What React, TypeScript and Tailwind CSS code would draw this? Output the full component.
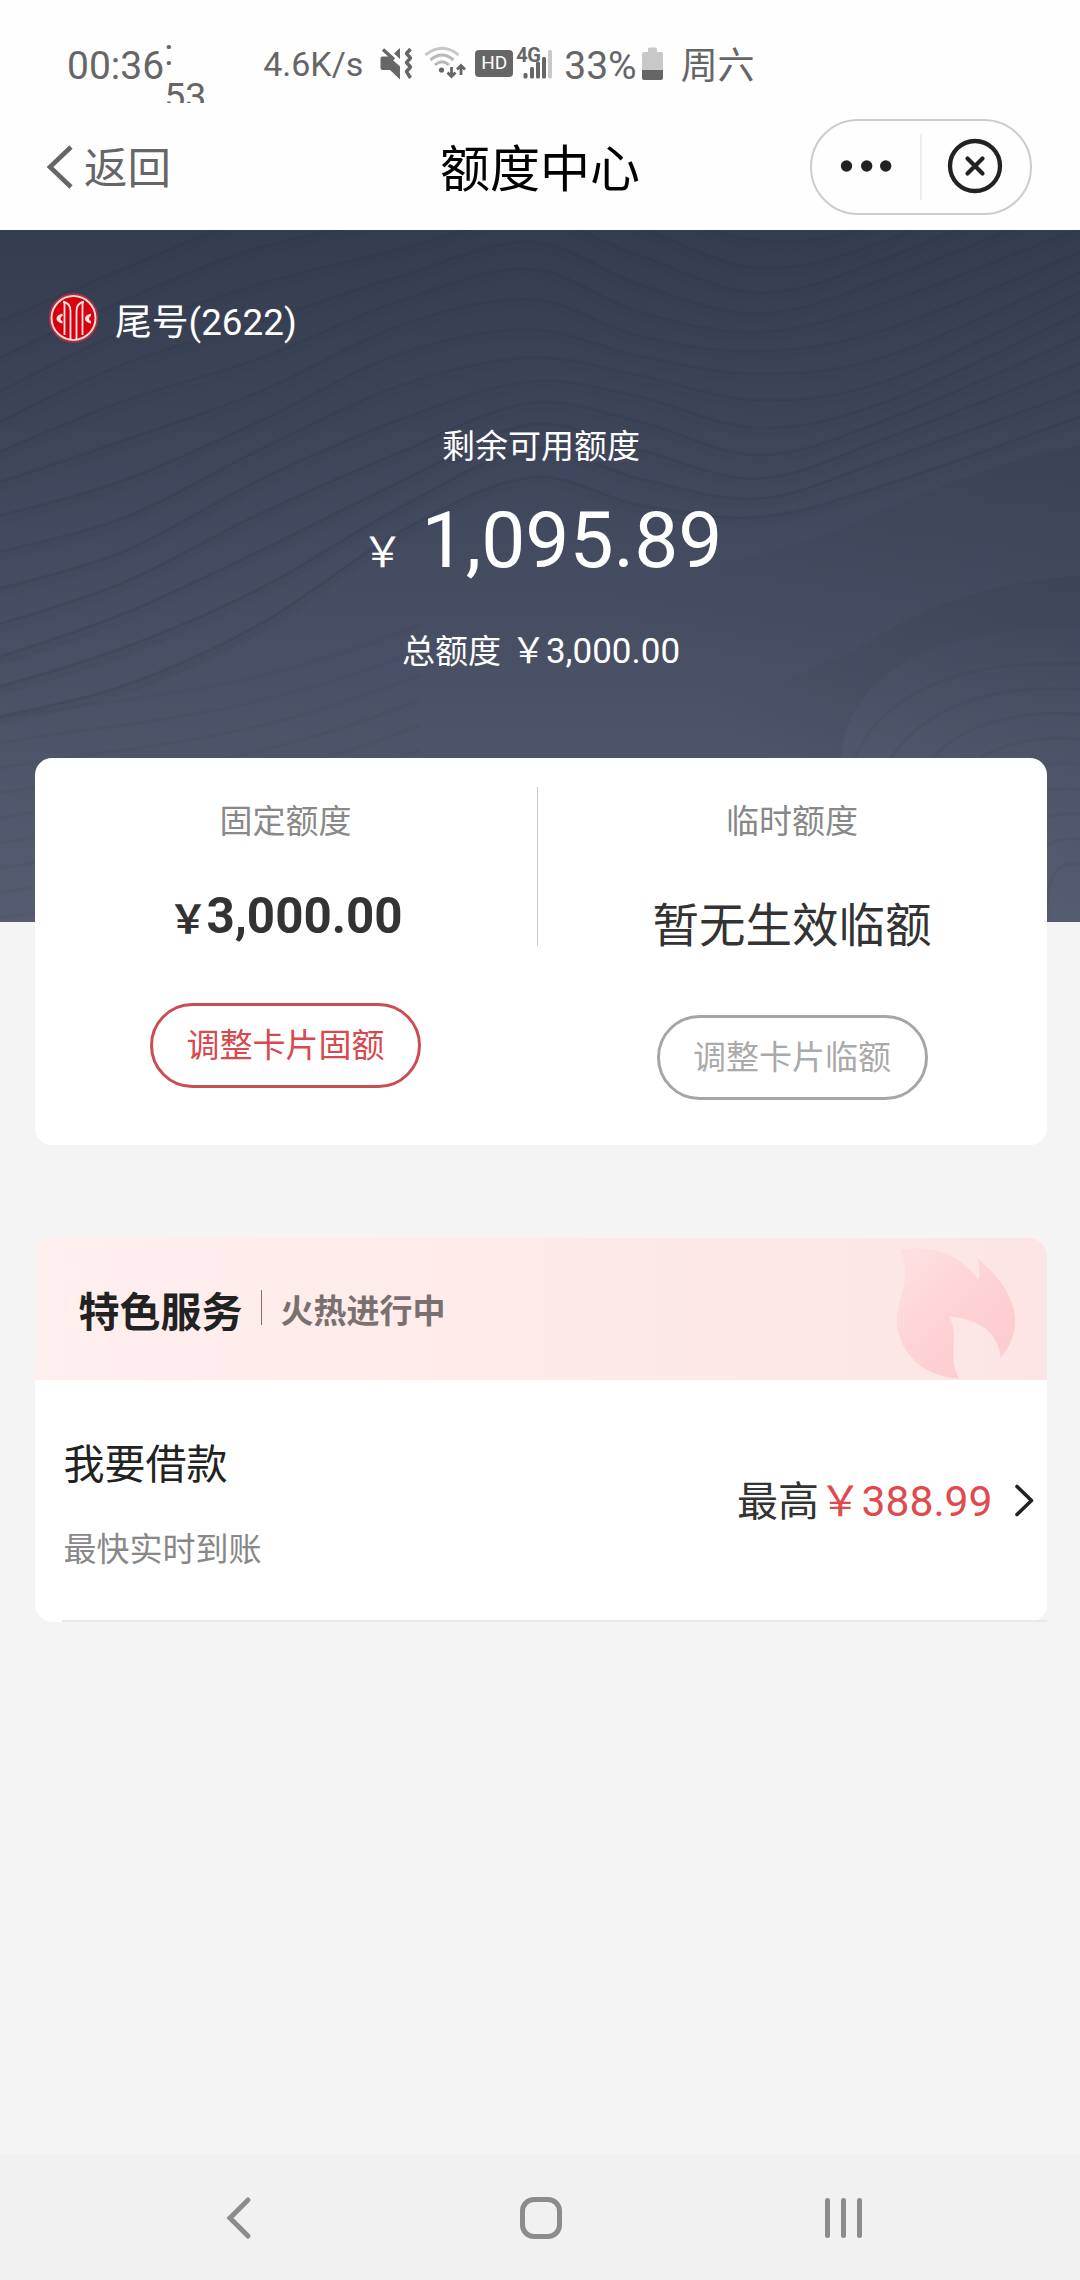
import type { ReactNode } from "react"

type Point = [number, number]

// First and last contour of the hero pattern, the rest are blended between them
const CONTOUR_TOP: Point[] = [[-20, 100], [120, 35], [260, -10], [400, -45], [530, -60], [640, -20], [760, 10], [890, -15], [1100, -110]]
const CONTOUR_BOTTOM: Point[] = [[-20, 460], [120, 425], [260, 355], [400, 275], [530, 225], [640, 245], [760, 266], [890, 234], [1100, 150]]

function smoothPath(points: Point[]) {
  let d = `M${points[0][0]} ${points[0][1]}`
  for (let i = 0; i < points.length - 1; i++) {
    const p0 = points[i - 1] ?? points[i]
    const p1 = points[i]
    const p2 = points[i + 1]
    const p3 = points[i + 2] ?? p2
    d += ` C${p1[0] + (p2[0] - p0[0]) / 6} ${p1[1] + (p2[1] - p0[1]) / 6} ${p2[0] - (p3[0] - p1[0]) / 6} ${p2[1] - (p3[1] - p1[1]) / 6} ${p2[0]} ${p2[1]}`
  }
  return d
}

function contour(t: number) {
  return smoothPath(
    CONTOUR_TOP.map(([x, y], i): Point => [
      x,
      y + (CONTOUR_BOTTOM[i][1] - y) * t + Math.sin(i * 2.1 + t * 9) * 6,
    ])
  )
}

function HeroPattern() {
  const lines = Array.from({ length: 13 }, (_, i) => contour(i / 11))
  const rings = Array.from({ length: 9 }, (_, i) => i * 25)
  return (
    <svg className="absolute inset-0 size-full" viewBox="0 0 1080 692" fill="none" preserveAspectRatio="none">
      <defs>
        <linearGradient id="ridge" x1="1" y1="0.1" x2="0.4" y2="0.6">
          <stop offset="0" stopColor="#2f384b" stopOpacity="0.22" />
          <stop offset="1" stopColor="#2f384b" stopOpacity="0" />
        </linearGradient>
        <linearGradient id="mound" x1="0" y1="0" x2="0" y2="1">
          <stop offset="0" stopColor="#5d647b" stopOpacity="0.05" />
          <stop offset="0.5" stopColor="#5d647b" stopOpacity="0.3" />
        </linearGradient>
      </defs>
      <path d="M1080 215 C1000 230 930 260 860 290 C800 318 700 340 600 350 L500 692 L1080 692 Z" fill="url(#ridge)" />
      <path d="M1080 345 C980 355 930 375 880 405 C830 435 720 480 600 520 L600 692 L1080 692 Z" fill="url(#ridge)" />
      {lines.map((d, i) => (
        <g key={i}>
          <path d={d} stroke="#2b3446" strokeOpacity="0.2" strokeWidth="2.5" />
          <path d={d} transform="translate(0 5)" stroke="#2b3446" strokeOpacity="0.07" strokeWidth="8" />
        </g>
      ))}
      <path d="M842 540 C838 480 880 440 930 420 C980 402 1030 398 1080 398 V692 H842 Z" fill="url(#mound)" />
      {rings.map((r) => (
        <path
          key={r}
          d={`M${850 + r} ${560 + r} C${850 + r} ${490 + r} ${930 + r / 2} ${422 + r} 1090 ${435 + r}`}
          stroke="#2b3446"
          strokeOpacity="0.08"
          strokeWidth="3"
        />
      ))}
      {rings.map((r) => (
        <path key={r} d={`M-10 ${490 + r} C120 ${465 + r} 230 ${470 + r} 420 ${395 + r}`} stroke="#2b3446" strokeOpacity="0.06" strokeWidth="3" />
      ))}
    </svg>
  )
}

function MuteIcon() {
  return (
    <svg className="ml-[17px] mt-[47px] h-[33px] w-[33px]" viewBox="0 0 33 33" fill="none">
      <path d="M0.5 11.5 Q0.5 9.5 2.5 9.5 H9 L20 19.5 V32.5 L10 23 H2.5 Q0.5 23 0.5 21 Z" fill="#666" />
      <path d="M3 2.5 L14 12.5" stroke="#666" strokeWidth="3.4" />
      <path d="M14 6.5 L20 1 V12 Z" fill="#666" />
      <path d="M30.5 2 L26.5 6.5 L30.5 11 L26.5 15.5 L30.5 20 L26.5 24.5 L30.5 31" stroke="#666" strokeWidth="3.4" strokeLinejoin="round" />
    </svg>
  )
}

function WifiIcon() {
  return (
    <svg className="ml-[11px] mt-[46px] h-[34px] w-[42px]" viewBox="0 0 42 34" fill="none">
      <path d="M1.5 9 Q18 -4.5 34.5 9" stroke="#c8c8c8" strokeWidth="3" />
      <path d="M6.5 14 Q18 4 29.5 14" stroke="#b8b8b8" strokeWidth="3" />
      <path d="M11 19 Q18 12.5 25 19" stroke="#b8b8b8" strokeWidth="3" />
      <circle cx="17.5" cy="24" r="2.6" fill="#666" />
      <path d="M27.5 21 V30 M23.5 26.5 L27.5 30.5 L31.5 26.5" stroke="#666" strokeWidth="2.8" />
      <path d="M37 29 V20 M33 23.5 L37 19.5 L41 23.5" stroke="#666" strokeWidth="2.8" />
    </svg>
  )
}

function SignalIcon() {
  return (
    <div className="relative ml-[3px] mt-[46px] h-[34px] w-[36px]">
      <span className="absolute -top-[1px] left-0 text-[20px] leading-[20px] font-bold tracking-[-0.5px]">4G</span>
      <svg className="absolute inset-0 size-full" viewBox="0 0 36 34">
        <rect x="7.5" y="27" width="4" height="5.5" rx="1.5" fill="#666" />
        <rect x="14" y="21" width="4" height="11.5" rx="1.5" fill="#666" />
        <rect x="20" y="15.5" width="4" height="17" rx="1.5" fill="#666" />
        <rect x="26" y="11" width="4" height="21.5" rx="1.5" fill="#666" />
        <rect x="32" y="4" width="4" height="28.5" rx="1.5" fill="#c8c8c8" />
      </svg>
    </div>
  )
}

function StatusBar() {
  return (
    <div className="flex h-[103px] items-start overflow-hidden pl-[67px] text-[#666]">
      <span className="mt-[43px] text-[39px] leading-[46px]">00:36</span>
      <span className="mt-[30px] w-[60px] text-[37.5px] leading-[44px]">
        :<br />53
      </span>
      <span className="ml-[39px] mt-[44px] text-[34px] leading-[40px]">4.6K/s</span>
      <MuteIcon />
      <WifiIcon />
      <span className="ml-[9px] mt-[50px] flex h-[27px] w-[38px] items-center justify-center rounded-[4px] bg-[#666] text-[19px] text-white">
        HD
      </span>
      <SignalIcon />
      <span className="ml-[12px] mt-[43px] text-[39px] leading-[46px]">33%</span>
      <svg className="ml-[5px] mt-[47px] h-[33px] w-[21px]" viewBox="0 0 21 33">
        <path d="M6 5 V2 Q6 0.5 7.5 0.5 H13.5 Q15 0.5 15 2 V5 H19 Q21 5 21 7 V23 H0 V7 Q0 5 2 5 Z" fill="#c8c8c8" />
        <path d="M0 23 H21 V31 Q21 33 19 33 H2 Q0 33 0 31 Z" fill="#666" />
      </svg>
      <span className="ml-[18px] mt-[44px] text-[37px] leading-[46px]">周六</span>
    </div>
  )
}

function Header() {
  return (
    <div className="grid h-[127px] grid-cols-[400px_280px_400px]">
      <div className="flex items-start pl-[46px] pt-[42px] text-[#666]">
        <svg className="h-[44px] w-[28px]" viewBox="0 0 28 44" fill="none">
          <path d="M25 2 L4 22 L25 42" stroke="currentColor" strokeWidth="4.6" />
        </svg>
        <span className="ml-[10px] text-[43.5px] leading-[50px]">返回</span>
      </div>
      <h1 className="pt-[37px] text-center text-[50px] leading-[60px] text-black">额度中心</h1>
      <div className="flex items-start justify-end pr-[48px] pt-[16px]">
        <div className="flex h-[96px] w-[222px] items-center rounded-full border-2 border-[#ccc]">
          <svg className="mb-[2px] ml-[28px] h-[12px] w-[52px]" viewBox="0 0 52 12" fill="#222">
            <circle cx="6.5" cy="6" r="5.7" />
            <circle cx="26.7" cy="6" r="5.7" />
            <circle cx="45.7" cy="6" r="5.7" />
          </svg>
          <div className="ml-[28px] h-[66px] w-[2px] bg-[#eee]" />
          <svg className="mb-[2px] ml-[25px] h-[56px] w-[56px]" viewBox="0 0 56 56" fill="none" stroke="#222">
            <circle cx="28" cy="28" r="25" strokeWidth="4.3" />
            <path d="M20.5 20.5 L35.5 35.5 M35.5 20.5 L20.5 35.5" strokeWidth="4.2" strokeLinecap="round" />
          </svg>
        </div>
      </div>
    </div>
  )
}

function BankLogo() {
  return (
    <svg className="size-[50px]" viewBox="0 0 50 50" fill="none">
      <circle cx="24.5" cy="25" r="24" stroke="#c4283a" strokeWidth="1.4" />
      <circle cx="24.5" cy="25" r="22" fill="#d7000f" stroke="#f8d4d4" strokeWidth="2" />
      <g stroke="#fbe6e6" strokeWidth="1.8">
        <path d="M15.5 8 V42" />
        <path d="M14 9 Q21.5 10 21.5 18 V46" />
        <path d="M33.5 8 V42" />
        <path d="M35 9 Q27.5 10 27.5 18 V46" />
      </g>
      <path d="M13.5 20.5 V23 Q11.5 23.5 11.5 25.5 Q11.5 27.5 13.5 28 V30.5 Q7.5 29 7.5 25.5 Q7.5 22 13.5 20.5 Z" fill="#fbe6e6" />
      <path d="M42 20.5 V23 Q40 23.5 40 25.5 Q40 27.5 42 28 V30.5 Q36 29 36 25.5 Q36 22 42 20.5 Z" fill="#fbe6e6" />
    </svg>
  )
}

function Hero() {
  return (
    <section className="relative h-[692px] bg-gradient-to-b from-[#343c50] via-[#454b60] to-[#565c71] text-white">
      <HeroPattern />
      <div className="relative flex flex-col items-center">
        <div className="mt-[63px] flex h-[50px] w-full items-center gap-[16px] pl-[49px]">
          <BankLogo />
          <span className="pt-[9px] text-[36.8px] leading-[46px]">尾号(2622)</span>
        </div>
        <p className="mt-[84px] pl-[2px] text-[33px] leading-[40px]">剩余可用额度</p>
        <p className="mt-[27px] flex items-baseline pl-[4px] leading-[92px]">
          <span className="text-[42px]">￥</span>
          <span className="ml-[18px] text-[78.5px]">1,095.89</span>
        </p>
        <p className="mt-[33px] flex items-baseline pl-[2px] text-[33px] leading-[40px]">
          <span>总额度</span>
          <span className="ml-[10px] text-[35px]">￥3,000.00</span>
        </p>
      </div>
    </section>
  )
}

function QuotaButton({ tone, children }: { tone: string; children: ReactNode }) {
  return (
    <button className={`flex h-[85px] w-[271px] items-center justify-center rounded-full border-[3px] text-[33px] leading-[40px] ${tone}`}>
      {children}
    </button>
  )
}

function QuotaCard() {
  return (
    <section className="relative mx-auto -mt-[164px] flex h-[387px] w-[1012px] rounded-[17px] bg-white">
      <div className="flex w-[502px] flex-col items-center pt-[44px]">
        <p className="text-[33px] leading-[40px] text-[#888]">固定额度</p>
        <p className="mt-[45px] flex items-baseline leading-[58px] font-bold text-[#333]">
          <span className="text-[39px]">￥</span>
          <span className="-ml-[1px] text-[49.3px]">3,000.00</span>
        </p>
        <div className="mt-[54px]">
          <QuotaButton tone="border-[#cb4d53] text-[#d9484d]">调整卡片固额</QuotaButton>
        </div>
      </div>
      <div className="mt-[29px] h-[159px] w-px bg-[#ccc]" />
      <div className="flex flex-1 flex-col items-center pt-[44px]">
        <p className="text-[33px] leading-[40px] text-[#888]">临时额度</p>
        <p className="mt-[54px] text-[46.5px] leading-[60px] text-[#333]">暂无生效临额</p>
        <div className="mt-[59px]">
          <QuotaButton tone="border-[#a6a6a6] text-[#aaa]">调整卡片临额</QuotaButton>
        </div>
      </div>
    </section>
  )
}

function Flame() {
  return (
    <svg className="absolute right-[30px] top-[8px] h-[134px] w-[122px]" viewBox="0 0 122 134">
      <defs>
        <linearGradient id="flame" x1="0.1" y1="0.1" x2="0.7" y2="0.8">
          <stop offset="0" stopColor="#fddfe1" />
          <stop offset="0.55" stopColor="#fed3d5" />
          <stop offset="1" stopColor="#fdcdd0" />
        </linearGradient>
      </defs>
      <path
        d="M6 4 C42 -3 66 11 83.5 34 Q86 22 82 12 C104 30 118 50 120 71 C121 88 115 100 105.5 112 C104 88 86 73 54 70.5 C66 92 51 106 64 132.5 C25 131 2 103 2 74 C2 52 17 38 6 4 Z"
        fill="url(#flame)"
      />
    </svg>
  )
}

function ServiceCard() {
  return (
    <section className="mx-auto mt-[93px] h-[384px] w-[1012px] overflow-hidden rounded-[18px] bg-white">
      <div className="relative flex h-[142px] items-start bg-gradient-to-r from-[#ffefee] to-[#fde5e5] pl-[44px]">
        <h2 className="mt-[51px] text-[41px] leading-[48px] font-bold text-[#222]">特色服务</h2>
        <div className="ml-[18px] mt-[52px] h-[35px] w-px bg-[#7d7272]" />
        <span className="ml-[19px] mt-[54px] text-[33px] leading-[40px] font-bold text-[#7b7070]">火热进行中</span>
        <Flame />
      </div>
      <div className="flex h-[242px] items-start pl-[29px]">
        <div className="pt-[60px]">
          <p className="text-[41px] leading-[50px] text-[#222]">我要借款</p>
          <p className="mt-[40px] text-[33px] leading-[40px] text-[#888]">最快实时到账</p>
        </div>
        <div className="ml-auto flex items-start pr-[12px] pt-[95px] leading-[50px]">
          <p className="mt-[1px] flex items-baseline">
            <span className="text-[41px] text-[#333]">最高</span>
            <span className="text-[42.6px] text-[#e04a4e]">￥388.99</span>
          </p>
          <svg className="ml-[21px] mt-[9px] h-[33px] w-[21px]" viewBox="0 0 21 33" fill="none">
            <path d="M3 2.5 L17.5 16.5 L3 30.5" stroke="#222" strokeWidth="3.6" strokeLinecap="round" strokeLinejoin="round" />
          </svg>
        </div>
      </div>
    </section>
  )
}

function NavBar() {
  return (
    <nav className="flex h-[126px] items-start bg-[#f1f1f1] pl-[224px] pt-[41px] text-[#8c8c8c]">
      <svg className="h-[46px] w-[30px]" viewBox="0 0 30 46" fill="none">
        <path d="M24 5 L6 23 L24 41" stroke="currentColor" strokeWidth="5" strokeLinecap="round" />
      </svg>
      <div className="ml-[266px] mt-[2px] size-[42px] rounded-[14px] border-[5px] border-current" />
      <div className="ml-[263px] mt-[3px] flex gap-[11px]">
        <i className="h-[40px] w-[5px] rounded-full bg-current" />
        <i className="h-[40px] w-[5px] rounded-full bg-current" />
        <i className="h-[40px] w-[5px] rounded-full bg-current" />
      </div>
    </nav>
  )
}

export default function App() {
  return (
    <div className="flex h-[2280px] w-[1080px] flex-col bg-[#f4f4f4] font-[Roboto,'Noto_Sans_CJK_SC',sans-serif]">
      <div className="bg-[#fefefe]">
        <StatusBar />
        <Header />
      </div>
      <Hero />
      <div className="flex-1 pl-px">
        <QuotaCard />
        <ServiceCard />
        <div className="ml-[61px] -mt-[2px] mr-[33px] h-[2px] bg-[#e9e9e9]" />
      </div>
      <NavBar />
    </div>
  )
}
